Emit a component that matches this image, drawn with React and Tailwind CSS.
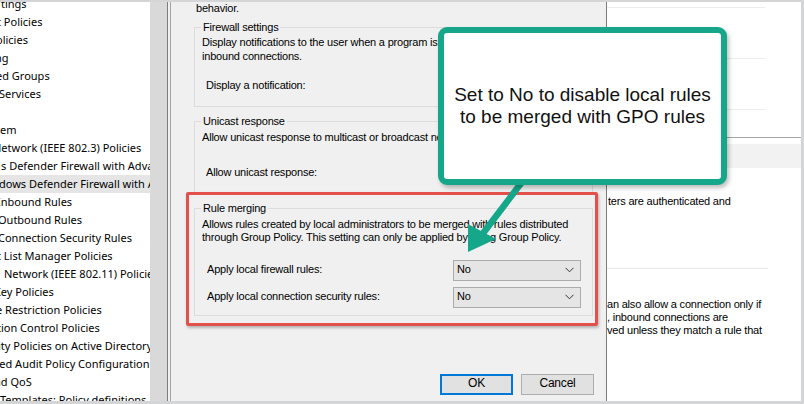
import React from 'react';

const tree = [
  ['tings', 'ml-[1px]'],
  ['t Policies', '-ml-[3px]'],
  ['olicies', '-ml-[4px]'],
  ['ng', '-ml-[5px]'],
  ['ed Groups', '-ml-[4px]'],
  ['Services', '-ml-[1px]'],
  ['', ''],
  ['tem', '-ml-[4px]'],
  ['Network (IEEE 802.3) Policies', '-ml-[7px]'],
  ['s Defender Firewall with Advanced', 'ml-[1px]'],
  ['dows Defender Firewall with Advanced', '-ml-[1px]', true],
  ['Inbound Rules', '-ml-[3px]'],
  ['Outbound Rules', '-ml-[2px]'],
  ['Connection Security Rules', '-ml-[2px]'],
  ['t List Manager Policies', '-ml-[3px]'],
  ['Network (IEEE 802.11) Policies', 'ml-[4px]'],
  ['Key Policies', '-ml-[6px]'],
  ['e Restriction Policies', '-ml-[4px]'],
  ['tion Control Policies', '-ml-[3px]'],
  ['ity Policies on Active Directory', '-ml-[2px]'],
  ['ced Audit Policy Configuration', '-ml-[6px]'],
  ['nd QoS', '-ml-[6px]'],
  ['Templates: Policy definitions', 'ml-0'],
];

function Chevron() {
  return (
    <svg width="9" height="6" viewBox="0 0 9 6" className="mr-[6px]">
      <polyline points="0.5,0.8 4.5,4.8 8.5,0.8" fill="none" stroke="#333" strokeWidth="1" />
    </svg>
  );
}

function Dropdown() {
  return (
    <div className="w-[128px] h-[21px] flex items-center justify-between bg-[#e5e5e5] border border-[#acacac] pl-[3px]">
      <span>No</span>
      <Chevron />
    </div>
  );
}

// groupbox with caption sitting on the top border
function Group({ title, className, children }) {
  return (
    <div className={'ml-[23px] mr-[13px] border border-[#dcdcdc] ' + className}>
      <div className="-mt-[7px] ml-[6px] px-[2px] w-fit h-[13px] leading-[13px] bg-[#f0f0f0]">{title}</div>
      {children}
    </div>
  );
}

export default function App() {
  return (
    <div className="relative w-[804px] h-[404px] bg-[#d3d5d7] pt-[2px] pr-[3px] pb-[3px] overflow-hidden font-['Liberation_Sans',Arial,sans-serif] text-black">
      <div className="flex h-full">
        {/* tree */}
        <div className="w-[150px] bg-white overflow-hidden font-['Noto_Sans',sans-serif] text-[11px]">
          <div className="-mt-[7px]">
            {tree.map(([t, ml, sel], i) => (
              <div key={i} className={'h-[18px] leading-[18px] whitespace-nowrap overflow-hidden ' + (sel ? 'bg-[#e5e5e5]' : '')}>
                <span className={'block ' + ml}>{t}</span>
              </div>
            ))}
          </div>
        </div>
        <div className="w-[17px] bg-[#d9d9d9]" />

        {/* dialog */}
        <div className="w-[440px] flex border-l border-r border-[#7d7d7d] bg-[#f0f0f0] pl-[2px]">
          <div className="flex-1 border-l border-[#a3a3a3] text-[11px] tracking-[-0.2px] leading-[13.5px]">
            <div className="h-[12px] leading-[12px] pl-[25px]">behavior.</div>

            <Group title="Firewall settings" className="mt-[13px] pb-[13px]">
              <p className="mt-[2px] pl-[7px] whitespace-nowrap">
                Display notifications to the user when a program is blocked from receiving
                <br />
                inbound connections.
              </p>
              <div className="mt-[16px] pl-[11px]">Display a notification:</div>
            </Group>

            <Group title="Unicast response" className="mt-[14px] pb-[13px]">
              <p className="mt-[3px] pl-[7px] whitespace-nowrap">Allow unicast response to multicast or broadcast network traffic.</p>
              <div className="mt-[22px] pl-[11px]">Allow unicast response:</div>
            </Group>

            <Group title="Rule merging" className="mt-[14px] pb-[7px]">
              <p className="mt-[3px] pl-[7px] whitespace-nowrap">
                Allows rules created by local administrators to be merged with rules distributed
                <br />
                through Group Policy. This setting can only be applied by using Group Policy.
              </p>
              <div className="mt-[15px] pl-[12px] flex items-center">
                <span className="w-[246px]">Apply local firewall rules:</span>
                <Dropdown />
              </div>
              <div className="mt-[6px] pl-[12px] flex items-center">
                <span className="w-[246px]">Apply local connection security rules:</span>
                <Dropdown />
              </div>
            </Group>

            <div className="mt-[58px] pr-[12px] flex justify-end gap-[8px] text-[12px]">
              <button className="w-[73px] h-[21px] bg-[#e1e1e1] border-2 border-[#0078d7]">OK</button>
              <button className="w-[73px] h-[21px] bg-[#e1e1e1] border border-[#adadad]">Cancel</button>
            </div>
          </div>
        </div>

        {/* right pane */}
        <div className="flex-1 bg-white overflow-hidden text-[11px] tracking-[-0.2px] leading-[13px] whitespace-nowrap">
          <div className="mt-[5px] h-px w-[158px] bg-[#ececec]" />
          <div className="mt-[50px] h-px w-[158px] bg-[#ececec]" />
          <div className="mt-[50px] h-px w-[158px] bg-[#ececec]" />
          <div className="mt-[27px] h-px bg-[#a5a5a5]" />
          <div className="mt-[6px] h-[24px] bg-[#f2f2f2]" />
          <div className="mt-[27px] pl-px">ters are authenticated and</div>
          <div className="mt-[60px] h-px w-[161px] bg-[#e8e8e8]" />
          <div className="mt-[29px]">
            an also allow a connection only if
            <br />, inbound connections are
            <br />
            ved unless they match a rule that
          </div>
        </div>
      </div>

      {/* annotations */}
      <div className="absolute left-[186px] top-[192px] w-[412px] h-[134px] border-[3px] border-[#e2514c] rounded-[2px] shadow-[1px_2px_3px_rgba(0,0,0,0.25)]" />
      <svg className="absolute left-0 top-0 w-[804px] h-[404px] pointer-events-none" viewBox="0 0 804 404">
        <line x1="522" y1="182" x2="481" y2="236" stroke="#16a68a" strokeWidth="6.5" />
        <polygon points="468,252 468,224 496,239" fill="#16a68a" />
      </svg>
      <div className="absolute left-[438px] top-[27px] w-[289px] h-[158px] border-[6px] border-[#16a68a] rounded-[9px] bg-white shadow-[2px_3px_4px_rgba(0,0,0,0.25)] flex flex-col items-center justify-center text-[19px] leading-[22px] text-[#111]">
        <div>Set to No to disable local rules</div>
        <div>to be merged with GPO rules</div>
      </div>
    </div>
  );
}
